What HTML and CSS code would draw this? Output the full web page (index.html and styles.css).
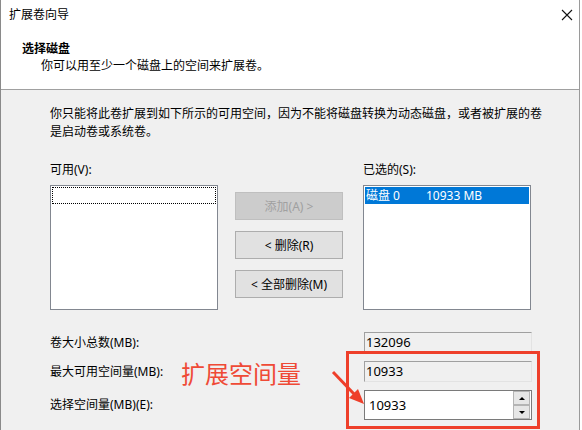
FILE: index.html
```html
<!DOCTYPE html>
<html lang="zh-CN">
<head>
    <meta charset="UTF-8">
    <title>扩展卷向导</title>
    <link rel="stylesheet" href="styles.css">
</head>
<body>

    <div class="window">
        <div class="header">
            <div class="titlebar">
                <span class="title">扩展卷向导</span>
                <svg class="close" width="12" height="12" viewBox="0 0 12 12">
                    <path d="M1 1 L11 11 M11 1 L1 11" stroke="#111" stroke-width="1.1" fill="none"/>
                </svg>
            </div>
            <div class="head-title">选择磁盘</div>
            <div class="head-sub">你可以用至少一个磁盘上的空间来扩展卷。</div>
        </div>

        <div class="content">
            <p class="desc">你只能将此卷扩展到如下所示的可用空间，因为不能将磁盘转换为动态磁盘，或者被扩展的卷是启动卷或系统卷。</p>

            <div class="lists">
                <div class="col">
                    <div class="label">可用(V):</div>
                    <div class="listbox">
                        <div class="focus-row"></div>
                    </div>
                </div>
                <div class="buttons">
                    <button class="btn" disabled>添加(A) &gt;</button>
                    <button class="btn">&lt; 删除(R)</button>
                    <button class="btn">&lt; 全部删除(M)</button>
                </div>
                <div class="col">
                    <div class="label">已选的(S):</div>
                    <div class="listbox">
                        <div class="sel-row"><span class="disk">磁盘 0</span><span>10933 MB</span></div>
                    </div>
                </div>
            </div>

            <div class="fields">
                <div class="f-label">卷大小总数(MB):</div>
                <div class="field readonly">132096</div>
                <div class="f-label">最大可用空间量(MB):</div>
                <div class="field readonly">10933</div>
                <div class="f-label">选择空间量(MB)(E):</div>
                <div class="field spin">
                    <span class="spin-val">10933</span>
                    <div class="spin-btns">
                        <div class="spin-btn"><span class="tri up"></span></div>
                        <div class="spin-btn"><span class="tri down"></span></div>
                    </div>
                </div>
            </div>
        </div>

        <!-- 标注 -->
        <div class="note-text">扩展空间量</div>
        <svg class="note-arrow" width="40" height="40" viewBox="0 0 40 40">
            <path d="M2 3 L24 26" stroke="#ee3f2a" stroke-width="3" fill="none"/>
            <polygon points="33,35 18,29 27,20" fill="#ee3f2a"/>
        </svg>
        <div class="note-box"></div>
    </div>

</body>
</html>
```

FILE: styles.css
```css
body {
    margin: 0;
    padding: 0;
    background-color: #ffffff;
    font-family: "Noto Sans", "Noto Sans CJK SC", sans-serif;
    font-size: 12px;
    color: #000;
}

.window {
    position: relative;
    width: 578px;
    height: 430px;
    background-color: #f0f0f0;
    border-left: 1px solid #8a8a8a;
    border-right: 1px solid #9a9a9a;
    overflow: hidden;
}

.header {
    height: 89px;
    background-color: #fff;
    border-bottom: 1px solid #a0a0a0;
}

.titlebar {
    height: 30px;
    display: flex;
    align-items: center;
    justify-content: space-between;
    padding: 0 6px 0 8px;
}

.title {
    line-height: 30px;
}

.head-title {
    margin-top: 10px;
    padding-left: 21px;
    font-weight: bold;
    line-height: 17px;
}

.head-sub {
    padding-left: 40px;
    line-height: 17px;
}

.content {
    padding-left: 49px;
}

.desc {
    width: 500px;
    margin: 15px 0 0;
    line-height: 18px;
}

.lists {
    display: flex;
    margin-top: 20px;
}

.label {
    line-height: 18px;
    margin-bottom: 6px;
}

.listbox {
    width: 166px;
    height: 123px;
    background-color: #fff;
    border: 1px solid #828790;
}

.focus-row {
    margin: 1px 1px 0 1px;
    height: 15px;
    border: 1px dotted #000;
}

.sel-row {
    margin: 1px 1px 0 1px;
    height: 17px;
    background-color: #0078d7;
    color: #fff;
    display: flex;
    align-items: center;
    padding-left: 1px;
    line-height: 17px;
}

.disk {
    width: 60px;
}

.buttons {
    display: flex;
    flex-direction: column;
    gap: 11px;
    margin: 31px 20px 0 17px;
}

.btn {
    width: 108px;
    height: 28px;
    font-family: "Noto Sans", "Noto Sans CJK SC", sans-serif;
    font-size: 12px;
    color: #000;
    background-color: #e1e1e1;
    border: 1px solid #adadad;
    padding: 0;
}

.btn:disabled {
    color: #a0a0a0;
    background-color: #cccccc;
    border-color: #bfbfbf;
}

.fields {
    display: grid;
    grid-template-columns: 314px 168px;
    grid-template-rows: 21px 21px 30px;
    row-gap: 8px;
    margin-top: 22px;
    align-items: center;
}

.f-label {
    line-height: 18px;
}

.field {
    box-sizing: border-box;
    height: 100%;
}

.readonly {
    border-top: 1px solid #a0a0a0;
    border-left: 1px solid #a0a0a0;
    border-right: 1px solid #e3e3e3;
    border-bottom: 1px solid #e3e3e3;
    padding-left: 1px;
    font-size: 13px;
    line-height: 19px;
}

.spin {
    display: flex;
    align-items: center;
    justify-content: space-between;
    background-color: #fff;
    border: 1px solid #7a7a7a;
    padding: 0 1px 0 4px;
}

.spin-val {
    font-size: 13px;
    line-height: 18px;
}

.spin-btns {
    display: flex;
    flex-direction: column;
}

.spin-btn {
    width: 15px;
    height: 12px;
    background-color: #e6e6e6;
    border: 1px solid #b4b4b4;
    display: flex;
    align-items: center;
    justify-content: center;
}

.tri {
    width: 0;
    height: 0;
    border-left: 3px solid transparent;
    border-right: 3px solid transparent;
}

.tri.up {
    border-bottom: 3px solid #000;
}

.tri.down {
    border-top: 3px solid #000;
}

/* 红色标注 */
.note-text {
    position: absolute;
    left: 180px;
    top: 357px;
    font-family: "Noto Sans CJK SC", sans-serif;
    font-size: 24px;
    line-height: 32px;
    color: #ef4a36;
}

.note-arrow {
    position: absolute;
    left: 330px;
    top: 369px;
}

.note-box {
    position: absolute;
    left: 345px;
    top: 351px;
    width: 188px;
    height: 72px;
    border: 3px solid #ee3f2a;
}
```
